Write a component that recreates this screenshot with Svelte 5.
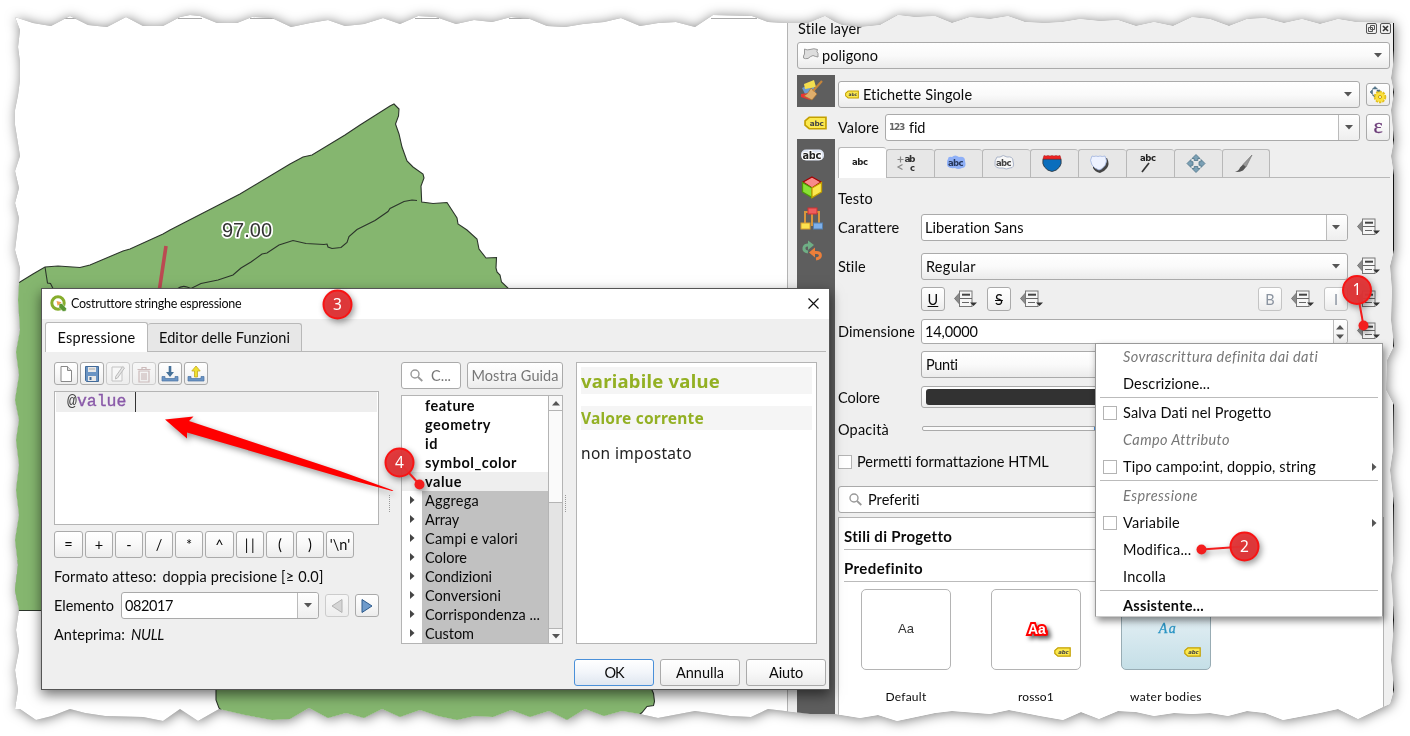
<script>
  // Sets letter spacing so that a label takes exactly the given width.
  function fit(node, width) {
    if (!width) return;
    const natural = node.getBoundingClientRect().width;
    node.style.letterSpacing = (width - natural) / node.textContent.length + 'px';
  }

  const edge = [
    '15,17 33,23 51,26 70,16 88,25 107,27 126,17 143,26 163,26 180,17 190,15 200,16 217,23 237,23 252,17 272,18 291,27 310,23 328,20 345,26 364,24 383,18 400,24 418,16 436,17 456,24 474,20 492,22 511,17 530,19 547,26 565,27 583,24 604,22 621,18 640,26 658,23 676,22 695,27 713,15 752,16 768,22 785,23',
    '808,23 825,16 835,22 842,25 860,27 880,25 898,15 915,17 935,16 952,23 970,17 990,19 1008,16 1025,22 1045,23 1062,22 1080,19 1100,21 1118,20 1136,26 1154,22 1173,26 1192,17 1210,19 1229,26 1247,19 1265,18 1284,23 1302,19 1320,24 1338,19 1356,22 1394,23',
    '1394,50 1393,64 1391,78 1394,92 1391,110 1394,140 1391,156 1394,175 1394,250 1390,266 1392,290 1391,320 1394,346 1387,360 1386,390 1394,405 1393,450 1390,470 1394,505 1393,560 1391,575 1394,620 1391,660 1394,690 1390,704',
    '1383,707 1358,719 1338,709 1320,713 1283,720 1265,713 1247,711 1228,716 1210,713 1192,714 1174,713 1154,716 1136,712 1118,711 1099,719 1081,712 1063,720 1040,716 1009,710 990,714 952,711 935,713 897,721 878,715 860,718 835,714 810,714 768,709 751,717 730,716 695,711 658,718 640,714 622,711 604,716 585,709 567,720 549,711 530,717 511,710 493,717 475,716 457,720 438,716 420,710 400,717 382,709 364,718 346,713 328,718 309,708 290,719 272,720 245,715 219,709 198,721 180,709 163,721 143,717 105,716 85,713 70,709 52,716 36,720 20,709 15,709',
    '18,690 15,670 19,650 16,630 19,610 15,590 18,565 15,540 19,515 16,490 19,465 16,440 19,420 15,400 19,375 16,352 20,330 18,300 20,268 15,250 19,218 15,203 19,188 15,171 20,156 15,125 15,110 18,95 20,80 20,62 18,47 20,30'
  ].join(' ');
  const clip = 'polygon(' + edge.split(' ').map((p) => p.replace(',', 'px ') + 'px').join(',') + ')';

  const ops = [['=', 29], ['+', 28], ['-', 28], ['/', 28], ['*', 28], ['^', 29], ['||', 28], ['(', 28], [')', 28], ["'\\n'", 28]];
  const fields = [['feature', 50], ['geometry', 66], ['id', 13], ['symbol_color', 92], ['value', 37]];
  const groups = [['Aggrega', 54], ['Array', 34], ['Campi e valori', 93], ['Colore', 42], ['Condizioni', 67], ['Conversioni', 76], ['Corrispondenza ...', 115], ['Custom', 49]];
  const files = ['new', 'save', 'edit', 'trash', 'import', 'export'];
  const tabs = ['text', 'format', 'buffer', 'mask', 'shield', 'shadow', 'callout', 'place', 'brush'];
  const menu = [
    { s: 'Sovrascrittura definita dai dati', w: 194, head: true },
    { s: 'Descrizione...', w: 87 },
    { line: true },
    { s: 'Salva Dati nel Progetto', w: 148, check: true },
    { s: 'Campo Attributo', w: 106, head: true },
    { s: 'Tipo campo:int, doppio, string', w: 193, check: true, sub: true },
    { line: true },
    { s: 'Espressione', w: 75, head: true },
    { s: 'Variabile', w: 57, check: true, sub: true },
    { s: 'Modifica...', w: 68 },
    { s: 'Incolla', w: 43 },
    { line: true },
    { s: 'Assistente...', w: 81, bold: true }
  ];
  const pins = [
    { n: 1, x: 1357, y: 290, dx: 1363.5, dy: 325.5 },
    { n: 2, x: 1244.5, y: 546.5, dx: 1201.5, dy: 549.5 },
    { n: 3, x: 337.5, y: 304.5 },
    { n: 4, x: 399.5, y: 462.5, dx: 419.5, dy: 484.5 }
  ];
</script>

{#snippet t(s, w)}<span class="t" use:fit={w}>{s}</span>{/snippet}

{#snippet down()}<svg class="down" width="8" height="5"><path d="M0 0h8L4 4.5z" fill="#555" /></svg>{/snippet}

{#snippet override()}
  <svg width="23" height="18" viewBox="0 0 23 18" class="ovr">
    <path d="M5.5 3v11L.5 8.5z" fill="#8a8a8a" stroke="#777" />
    <rect x="5.5" y="1" width="12.5" height="15.5" fill="#f6f6f6" stroke="#777" />
    <path d="M8 4.7h8" stroke="#444" stroke-width="2" />
    <path d="M6 8.5h12M8 12.5h7" stroke="#666" />
    <path d="M16 12.5h7l-3.500 3.500z" fill="#333" />
  </svg>
{/snippet}

{#snippet tag(w, h)}
  <svg width={w} height={h} viewBox="0 0 22 13">
    <path d="M5 1h16v11H5L1 8.5v-4z" fill="#fce94f" stroke="#c4a000" stroke-width="1.6" />
    <text x="5.500" y="9.300" textLength="13.500" class="abc" font-size="7" fill="#444">abc</text>
  </svg>
{/snippet}

{#snippet glass()}
  <svg width="13" height="13"><circle cx="5" cy="5" r="4" fill="none" stroke="#999" stroke-width="1.4" /><path d="M8 8l4.3 4" stroke="#999" stroke-width="1.8" /></svg>
{/snippet}

<div class="page">
  <div class="torn">
    <div class="paper" style:clip-path={clip}>
      <svg class="map" width="787" height="736">
        <path d="M52 18.5h26M178 18.5h24M250 18.5h24M415 18.5h24M509 18.5h20M711 18.5h46" stroke="#aaa" />
        <g fill="#85b66f" stroke="#2c352b" stroke-width="1.1">
          <path d="M-2 294L20 282 33 274 45 267 58 266 80 267.500 90 265 123 251 130 249 163 234 170 230 240 194 290 164 303 157 312 155 345 135 360 125 390 106 394 104 399 109 398.500 116 395.500 124 399 134 402 147 407 161 413 167 423 174 424 178 421 186 421.700 202 433 203.500 447 202.500 457 218 458 224 467 230 477 239 479 249 486 258 496.500 257.500 496 268 497 272 500 275 501.500 282 508 288 560 400V600H-2z" />
          <path d="M-2 560H42V610.500H-2z" stroke="none" /><path d="M14 610.500H42" />
          <path d="M216 680V700l3 8 30 30H610l32-25.500 5-6 6.500-1 1-4-1-8-4-9V680z" />
          <path fill="none" d="M45 267l2.500 16 3 .5 2.500 5M177 289q5-4 10-2l4 1.500 10-5 17-3.500 15-5 8-7 10-6 11-8 5-1 12-8 14-4.500 13 3 18 1 3-.500 1 3 4 1.500 9-1 6-5 2-6 8-7 18-9 13-9 2-3 14-7 8-1.500 5 .5" />
        </g>
        <path d="M166 246L159.500 289" stroke="#bb4a52" stroke-width="3.600" />
        <text x="222" y="236.500" class="maplabel">97.00</text>
      </svg>

      <section class="dock">
        <header class="dockhead">
          {@render t('Stile layer', 64)}
          <svg width="26" height="11" fill="none" stroke="#555"><rect x=".5" y=".5" width="10" height="10" rx="1.500" /><path d="M4.500 2.500h4v4h-4zM2.500 4.500h4v4h-4z" fill="#eee" /><rect x="14.500" y=".5" width="10" height="10" rx="1.500" /><path d="M17 3l5 5M22 3l-5 5" stroke="#333" stroke-width="1.600" /></svg>
        </header>
        <div class="combo layer">
          <svg width="17" height="12"><path d="M2.500 1Q5 2.500 8 1.500 12 0 15.500 1.500q-1.500 2 .5 4v3.500q-3-.5-5-1.500-3 1-5 3-3 .5-4.500-.5-.5-2 1-4z" fill="#ddd" stroke="#999" /></svg>
          {@render t('poligono', 56)}{@render down()}
        </div>
        <div class="body">
          <nav class="rail">
            <div><svg width="24" height="24" viewBox="0 0 24 24"><path d="M2 9l11-5 3 11-9 4z" fill="#6c9bd0" /><path d="M4 5l10-4 2 7-11 2z" fill="#f4de4e" /><path d="M1 15l8-1 1 7-9-3z" fill="#e33" /><path d="M11 9l6 6-5 6-8-4q5-3 7-8z" fill="#dfae6c" stroke="#a8702c" stroke-width=".7" /><path d="M13 12L22 2" stroke="#c6853a" stroke-width="2.200" /></svg></div>
            <div class="sel">{@render tag(23, 14)}</div>
            <div><svg width="26" height="16"><rect x="1" y="2.500" width="23" height="11" rx="5" fill="#dfe6f3" /><text x="2.500" y="11.500" textLength="19" class="abc" font-size="10" fill="#222" stroke="#fff" stroke-width="2" paint-order="stroke">abc</text></svg></div>
            <div><svg width="24" height="24" viewBox="0 0 24 24" stroke-width="1.300"><path d="M12 2l9 5-9 6-9-6z" fill="#f88b8b" stroke="#a40000" /><path d="M2.500 7.500L12 13v9.500L2.500 17z" fill="#8ae234" stroke="#4e9a06" /><path d="M21.500 7.500L12 13v9.500l9.500-5.500z" fill="#fce94f" stroke="#c4a000" /></svg></div>
            <div><svg width="24" height="24" viewBox="0 0 24 24"><path d="M5 17V5h14v12M12 5v14" stroke="#d8963c" stroke-width="2" fill="none" /><rect x="8" y="1" width="9" height="6" fill="#ef5d5d" stroke="#c33" /><rect x="1" y="16" width="9" height="6" fill="#fce24f" stroke="#d8a030" /><rect x="13.500" y="16" width="9" height="6" fill="#7eb0ea" stroke="#5580b0" /></svg></div>
            <div><svg width="24" height="24" viewBox="0 0 24 24" fill="none" stroke-width="3"><path d="M8 13C2 12 3 5 9 6" stroke="#6fae85" /><path d="M8 1.500l6 4.500-6 5z" fill="#6fae85" /><path d="M16 20c6-1 6-7-1-6.500" stroke="#ec7f3a" /><path d="M15 8.500v10l-6-5z" fill="#ec7f3a" /></svg></div>
          </nav>
          <div class="main">
            <div class="row r1">
              <div class="combo grow">{@render tag(14, 9)}{@render t('Etichette Singole', 109)}{@render down()}</div>
              <div class="btn" style:height="23px"><svg width="18" height="18"><g fill="#54788f" stroke="#3d5d72" stroke-width=".5"><path d="M6 .5l2.500 2.500h-5zM1 6l2.500-2.500v5zM6 11.500L3.500 9h5zM8 4h3v3H8z" /></g><circle cx="11" cy="11" r="5" fill="#fce13c" stroke="#e3c01f" stroke-width="2.500" stroke-dasharray="2.200 1" /><circle cx="11" cy="11" r="4.500" fill="#fce13c" /><circle cx="11" cy="11" r="1.500" fill="#fff" stroke="#c4a000" /></svg></div>
            </div>
            <div class="row r2">
              {@render t('Valore', 41)}
              <div class="combo edit grow"><b class="num">{@render t('123', 15)}</b>{@render t('fid', 16)}<i class="arrow">{@render down()}</i></div>
              <div class="btn eps" style:height="27px">ε</div>
            </div>
            <div class="tabs">
              {#each tabs as tab, i}
                <div class="tab" class:active={i === 0}>
                  <svg width="24" height="22" viewBox="0 0 24 22">
                    {#if tab === 'text'}<text x="4" y="13" textLength="16" class="abc" font-size="8.500" fill="#222">abc</text>
                    {:else if tab === 'format'}<path d="M1.500 6.500h6M4.500 3.500v6M6.500 11.500l-4.500 2.500 4.500 2.500" fill="none" stroke="#888" stroke-width="1.200" /><text x="8.500" y="9" textLength="11" class="abc" font-size="9" fill="#333">ab</text><text x="14" y="18" class="abc" font-size="8.500" fill="#333">c</text>
                    {:else if tab === 'buffer'}<path d="M4 6q0-3 4-2 3-3 7 0 6-1 6 4 2 7-3 7-4 2-7 0-9 1-8-5 0-3 1-4z" fill="#8fb0f7" /><text x="4" y="13" textLength="15.500" class="abc" font-size="8.500" fill="#27385c">abc</text>
                    {:else if tab === 'mask'}<path d="M4 6q0-3 4-2 3-3 7 0 6-1 6 4 2 7-3 7-4 2-7 0-9 1-8-5 0-3 1-4z" fill="#f7f7f7" stroke="#aab4c8" /><text x="4" y="13" textLength="15.500" class="abc" font-size="8.500" fill="#444">abc</text>
                    {:else if tab === 'shield'}<path d="M3 6q-1 5 1.500 8 3 4 7.500 4.500 4.500-.5 7.500-4.500 2.500-3 1.500-8z" fill="#0a6ebd" stroke="#333" stroke-width=".8" /><path d="M3 6l1-3.500q2 1 4 0 2 1 4 0 2 1 4 0 2 1 4 0l1 3.500z" fill="#e22" stroke="#a22" stroke-width=".6" />
                    {:else if tab === 'shadow'}<path d="M5 5q2 1 4 0 3 1 5 0 2 1 5 0 3 6 0 10-3 4-7 5-5-1-7-5z" fill="#444" /><path d="M4 3q2 1 4 0 2 1 4 0 2 1 5 0 3 5 0 9.500-3 4-6 4.500-4-1-7-5Q1 7 4 3z" fill="#edf2ff" stroke="#9fb4e0" stroke-width=".8" />
                    {:else if tab === 'callout'}<text x="4" y="8" textLength="16" class="abc" font-size="8.500" fill="#222">abc</text><path d="M13 10L6 19" stroke="#333" stroke-width="1.700" />
                    {:else if tab === 'place'}<g fill="#7ba0b5" stroke="#4e7488" stroke-width=".8"><path d="M12 1.500l4 4h-2.200v2h-3.600v-2H8z" /><path d="M12 19.500l4-4h-2.200v-2h-3.600v2H8z" /><path d="M3 10.500l4-4v2.200h2v3.600h-2V14.500z" /><path d="M21 10.500l-4-4v2.200h-2v3.600h2V14.500z" /></g>
                    {:else}<path d="M20 2l-9 9.500 3 2.500z" fill="#999" stroke="#777" stroke-width=".7" /><path d="M11 11.500l3 2.500-3 3.500q-4 2-8 1.500 4-1.500 5-4.500z" fill="#555" />{/if}
                  </svg>
                </div>
              {/each}
            </div>
            <div class="row testo">{@render t('Testo', 35)}</div>
            <div class="row r3"><div class="lab">{@render t('Carattere', 61)}</div><div class="combo edit w427">{@render t('Liberation Sans', 99)}<i class="arrow">{@render down()}</i></div>{@render override()}</div>
            <div class="row r4"><div class="lab">{@render t('Stile', 28)}</div><div class="combo w427">{@render t('Regular', 50)}{@render down()}</div>{@render override()}</div>
            <div class="row r5">
              <div class="btn sq"><u>U</u></div>{@render override()}
              <div class="btn sq"><s>S</s></div>{@render override()}
              <div class="btn sq off right">B</div>{@render override()}
              <div class="btn sq off">I</div>{@render override()}
            </div>
            <div class="row r6"><div class="lab">{@render t('Dimensione', 77)}</div><div class="combo edit w427">{@render t('14,0000', 53)}<i class="arrow spin"><svg width="8" height="14"><path d="M0 4.500h8L4 0zM0 9.500h8L4 14z" fill="#555" /></svg></i></div>{@render override()}</div>
            <div class="row r7"><div class="combo w427">{@render t('Punti', 32)}</div></div>
            <div class="row r8"><div class="lab">{@render t('Colore', 42)}</div><div class="combo w427 color"><div class="swatch"></div></div></div>
            <div class="row r9"><div class="lab">{@render t('Opacità', 51)}</div><div class="slider"><i></i></div></div>
            <div class="row r10"><i class="check"></i>{@render t('Permetti formattazione HTML', 191)}</div>
            <div class="combo edit fav">{@render glass()}{@render t('Preferiti', 52)}</div>
            <div class="gallery">
              <h3>{@render t('Stili di Progetto', 108)}</h3>
              <h3>{@render t('Predefinito', 79)}</h3>
              <div class="thumbs">
                <figure><div class="thumb"><span class="aa">Aa</span></div><figcaption>{@render t('Default', 41)}</figcaption></figure>
                <figure><div class="thumb"><span class="aa red">Aa</span><i class="mini">{@render tag(17, 10)}</i></div><figcaption>{@render t('rosso1', 36)}</figcaption></figure>
                <figure><div class="thumb water"><span class="aa ital">Aa</span><i class="mini">{@render tag(17, 10)}</i></div><figcaption>{@render t('water bodies', 72)}</figcaption></figure>
              </div>
            </div>
          </div>
        </div>
      </section>

      <section class="dialog">
        <header class="title">
          <svg width="17" height="17" viewBox="0 0 17 17"><circle cx="8" cy="8" r="6.200" fill="none" stroke="#86ad2c" stroke-width="3" /><path d="M9 8.500h3l4.500 5-.5 2.500-3 .5-4-4z" fill="#589632" stroke="#fff" stroke-width=".5" /><path d="M6.500 6l5 1.200-3.800 3.800z" fill="#f0a050" /></svg>
          {@render t('Costruttore stringhe espressione', 170)}
          <svg class="close" width="11" height="11"><path d="M.5 .5l10 10M10.500 .5l-10 10" stroke="#111" stroke-width="1.200" /></svg>
        </header>
        <div class="dtabs"><div class="dtab on">{@render t('Espressione', 78)}</div><div class="dtab">{@render t('Editor delle Funzioni', 131)}</div></div>
        <div class="cols">
          <div class="left">
            <div class="tools">
              {#each files as f}
                <div class="btn" class:dim={f === 'edit' || f === 'trash'}>
                  <svg width="18" height="18" viewBox="0 0 18 18">
                    {#if f === 'new'}<path d="M4 1.500h6.500l4 4v11H4z" fill="#fff" stroke="#888" /><path d="M10.500 1.500v4h4" fill="#ddd" stroke="#888" />
                    {:else if f === 'save'}<path d="M2.500 1.500h13v15h-12l-1-1z" fill="#6a94c4" stroke="#426a98" /><path d="M5 2h8v5H5z" fill="#e8e8e8" /><path d="M6 4h6" stroke="#aaa" /><path d="M5 11h8v5H5z" fill="#e8e8e8" /><path d="M6.500 12h2v3h-2z" fill="#426a98" />
                    {:else if f === 'edit'}<path d="M3 2h10v14H3z" fill="#fff" stroke="#999" /><path d="M15.500 3l-7 10-2 1 .2-2.500 7-10z" fill="#ddd" stroke="#888" />
                    {:else if f === 'trash'}<path d="M4 6h10v11H4zM7 8v7M9 8v7M11 8v7M2.500 4.500h13M7 4V2.500h4V4" fill="none" stroke="#a88" stroke-width="1.200" />
                    {:else if f === 'import'}<path d="M1 11.500h3v2h10v-2h3v4.500H1z" fill="#6a94c4" stroke="#4a74a4" stroke-width=".7" /><path d="M7.700 1h2.600v6h2.700l-4 5-4-5h2.700z" fill="#467199" />
                    {:else}<path d="M1 11.500h3v2h10v-2h3v4.500H1z" fill="#6a94c4" stroke="#4a74a4" stroke-width=".7" /><path d="M7.500 12h3V6h2.700L9 1 4.800 6h2.700z" fill="#f0e030" stroke="#c4a820" stroke-width=".8" />{/if}
                  </svg>
                </div>
              {/each}
            </div>
            <div class="editor"><div class="line"><span>@</span>value<i></i></div></div>
            <div class="ops">{#each ops as [o, w]}<div class="btn" class:wide={o === '||'} style:width="{w}px">{o}</div>{/each}</div>
            <div class="row fmt">{@render t('Formato atteso:', 102)}{@render t('doppia precisione [≥ 0.0]', 161)}</div>
            <div class="row elem">{@render t('Elemento', 60)}<div class="combo edit">{@render t('082017', 48)}<i class="arrow">{@render down()}</i></div>
              <div class="btn dim"><svg width="12" height="14"><path d="M11 .5v13L1 7z" fill="#bbb" stroke="#777" /></svg></div>
              <div class="btn"><svg width="12" height="14"><path d="M1 .5v13L11 7z" fill="#6f9bcb" stroke="#2c5a8c" /></svg></div></div>
            <div class="row ante">{@render t('Anteprima:', 71)}<em>{@render t('NULL', 33)}</em></div>
          </div>
          <i class="split"></i>
          <div class="mid">
            <div class="row find"><div class="combo edit">{@render glass()}{@render t('C...', 20)}</div><div class="btn guide">{@render t('Mostra Guida', 87)}</div></div>
            <div class="tree">
              <div class="list">
                {#each fields as [n, w]}<div class="item field" class:cur={n === 'value'}>{@render t(n, w)}</div>{/each}
                {#each groups as [n, w]}<div class="item group"><svg width="5" height="8"><path d="M0 0v8l4.500-4z" fill="#444" /></svg><div>{@render t(n, w)}</div></div>{/each}
              </div>
              <div class="scroll"><div class="sb"><svg width="8" height="5"><path d="M0 4.500h8L4 0z" fill="#555" /></svg></div><div class="knob"></div><div class="track"></div><div class="sb">{@render down()}</div></div>
            </div>
          </div>
          <i class="split second"></i>
          <div class="help">
            <h1>{@render t('variabile value', 139)}</h1>
            <h2>{@render t('Valore corrente', 123)}</h2>
            <p>{@render t('non impostato', 111)}</p>
          </div>
        </div>
        <footer><div class="btn ok">{@render t('OK', 19)}</div><div class="btn">{@render t('Annulla', 48)}</div><div class="btn">{@render t('Aiuto', 34)}</div></footer>
      </section>

      <section class="menu">
        {#each menu as m}
          {#if m.line}<hr />
          {:else}
            <div class="mi" class:head={m.head} class:bold={m.bold}>
              <div class="ck">{#if m.check}<i class="check"></i>{/if}</div>
              {@render t(m.s, m.w)}
              {#if m.sub}<svg class="sub" width="5" height="8"><path d="M0 0v8l4.500-4z" fill="#555" /></svg>{/if}
            </div>
          {/if}
        {/each}
      </section>
    </div>
  </div>

  <svg class="notes" width="1410" height="736">
    <path d="M165 419.500L193.500 416.500 189 421 340 471 393.500 490.500 392 491 340 477 187 432.500 187 438.500z" fill="#f00" />
    {#each pins as p}
      {#if p.dx}<path d="M{p.x} {p.y}L{p.dx} {p.dy}" stroke="#f31d1d" stroke-width="2" /><circle cx={p.dx} cy={p.dy} r="5" fill="#f31d1d" />{/if}
      <circle cx={p.x} cy={p.y} r="14" fill="#e03234" fill-opacity=".95" stroke="#f81414" stroke-width="2" />
      <text x={p.x} y={p.y + 5} text-anchor="middle">{p.n}</text>
    {/each}
  </svg>
</div>

<style>
  :global(body) { margin: 0; background: #fff; overflow: hidden; }
  .page { position: relative; width: 1410px; height: 736px; overflow: hidden; background: #fff; font: 14.5px/19px Lato, "Noto Sans", sans-serif; color: #0a0a0a; }
  .page :global(svg) { display: block; flex: none; }
  .page div, .page header, .page i { box-sizing: border-box; }
  .torn { filter: drop-shadow(0 0 .6px #888) drop-shadow(1px 1px 6px rgba(0, 0, 0, .5)); }
  .paper { position: relative; display: flex; width: 1410px; height: 736px; background: #fff; }
  .t { display: inline-block; white-space: nowrap; flex: none; }
  .abc { font-family: "DejaVu Sans", sans-serif; font-weight: 700; }
  .maplabel { font: 20px "Liberation Sans", sans-serif; fill: #333; stroke: #fff; stroke-width: 3.5px; stroke-linejoin: round; paint-order: stroke; }

  .dock { width: 623px; box-sizing: border-box; border-left: 1px solid #b4b4b4; background: linear-gradient(90deg, #efefef 605px, #111 605px); padding: 19px 20px 0 9px; }
  .dockhead { display: flex; align-items: center; justify-content: space-between; width: 595px; height: 19px; padding: 0 0 0 1px; }
  .combo { display: flex; align-items: center; height: 27px; border: 1px solid #aaa; border-radius: 3px; background: linear-gradient(#fff, #fafafa 50%, #ebebeb); padding-left: 4px; }
  .combo > :global(.down) { margin: 0 7px 0 auto; }
  .combo.edit { background: #fff; padding-left: 3px; }
  .arrow { display: flex; align-items: center; justify-content: center; width: 21px; height: 100%; margin-left: auto; padding-right: 1px; border-left: 1px solid #bbb; background: linear-gradient(#fff, #eee); border-radius: 0 3px 3px 0; }
  .arrow.spin { width: 14px; }
  .layer { width: 593px; margin-top: 4px; gap: 3px; }
  .layer > svg:first-child { margin-top: -4px; }
  .body { display: flex; margin-top: 6px; height: 661px; }
  .rail { width: 38px; background: #5e5e5e; }
  .rail div { height: 32px; display: flex; align-items: center; padding: 0 0 0 3px; }
  .rail .sel { background: #efefef; padding: 0 0 0 7px; }
  .main { width: 553px; margin-left: 3px; padding-top: 6px; display: flex; flex-direction: column; }
  .row { display: flex; align-items: center; flex: none; }
  .grow { flex: 1; }
  .r1, .r2 { height: 27px; }
  .r1 .combo { gap: 4px; padding-left: 6px; }
  .r1 .btn, .r2 .btn { width: 24px; margin-left: 6px; }
  .r2 { margin-top: 6px; }
  .r2 .combo { margin-left: 6px; }
  .num { font: 700 9px/19px "DejaVu Sans", sans-serif; color: #666; margin-right: 5px; }
  .btn { display: flex; align-items: center; justify-content: center; flex: none; border: 1px solid #aaa; border-radius: 3px; background: linear-gradient(#fff, #f8f8f8 50%, #ececec); }
  .eps { font: 22px/20px "Liberation Serif", serif; color: #6a3a77; padding-bottom: 3px; -webkit-text-stroke: .3px #6a3a77; }
  .tabs { display: flex; align-items: flex-end; height: 31px; margin-top: 6px; border-bottom: 1px solid #b8b8b8; flex: none; width: 552px; }
  .tab { width: 48px; height: 28px; border: 1px solid #b8b8b8; border-width: 1px 0 0 1px; border-radius: 3px 3px 0 0; background: #e7e7e7; display: flex; justify-content: center; align-items: center; padding-right: 4px; }
  .tab:last-child { border-right-width: 1px; }
  .tab.active { width: 48px; height: 31px; background: #fff; margin-bottom: -1px; }
  .testo { margin-top: 10px; height: 20px; }
  .lab { width: 83px; flex: none; }
  .w427 { width: 427px; flex: none; }
  .row > .combo + :global(.ovr) { margin-left: 9px; margin-top: -2px; }
  .r3 { margin-top: 6px; height: 27px; }
  .r4 { margin-top: 12px; height: 27px; }
  .r5 { margin-top: 7px; height: 24px; padding-left: 83px; }
  .sq { width: 24px; height: 24px; }
  .r5 > :global(.ovr) { margin: 0 10px 0 9px; }
  .r5 .right { margin-left: 205px; }
  .r5 > :global(.ovr:last-child) { margin-right: 0; }
  .off { color: #8a93a0; border-color: #c4c4c4; }
  .r6 { margin-top: 8px; height: 25px; }
  .r6 .combo { height: 25px; }
  .r7 { margin-top: 7px; height: 27px; padding-left: 83px; }
  .r8 { margin-top: 8px; height: 22px; }
  .color { height: 22px; padding: 2px 4px; }
  .swatch { height: 16px; width: 100%; border-radius: 3px; background: #323232; }
  .r9 { margin-top: 12px; height: 19px; }
  .slider { width: 180px; height: 5px; margin-left: 1px; border: 1px solid #aaa; border-radius: 2px; background: #fafafa; margin-top: -2px; }
  .slider i { display: block; margin-left: 171px; width: 8px; height: 3px; background: #4a90d9; }
  .r10 { margin-top: 13px; height: 19px; gap: 5px; }
  .check { display: block; width: 14px; height: 14px; border: 1px solid #b4b4b4; background: #fff; flex: none; }
  .main > .fav { margin-top: 15px; padding-left: 10px; gap: 6px; width: 545px; flex: none; }
  .gallery { width: 546px; height: 220px; margin-top: 4px; border: 1px solid #b4b4b4; background: #fff; padding: 0 5px; flex: none; }
  h3 { margin: 0; height: 27px; padding-top: 4px; border-bottom: 1px solid #bbb; font: 700 15px/28px Lato, sans-serif; }
  .thumbs { display: flex; gap: 40px; padding: 7px 0 0 17px; }
  figure { margin: 0; width: 90px; text-align: center; }
  .thumb { height: 81px; border: 1px solid #b4b4b4; border-radius: 5px; display: flex; align-items: center; justify-content: center; position: relative; }
  .water { background: linear-gradient(#f0f6fa, #c5dfe7); border-color: #98acb4; }
  .aa { font: 13px/16px "Liberation Sans", sans-serif; color: #333; margin-top: -2px; }
  .red { color: #fff; font-weight: 700; font-size: 14px; margin-left: 2px; -webkit-text-stroke: 4px red; paint-order: stroke; filter: drop-shadow(3px 3px 2px rgba(0, 0, 0, .6)); }
  .ital { font-family: "Liberation Serif", serif; font-style: italic; font-size: 14px; margin-left: 4px; color: #2b95c4; letter-spacing: 1.5px; -webkit-text-stroke: .3px #2b95c4; }
  .mini { position: absolute; right: 9px; bottom: 12px; }
  figcaption { font-size: 12px; margin-top: 17px; }

  .dialog { position: absolute; left: 41px; top: 288px; width: 789px; height: 402px; box-sizing: border-box; border: 1px solid #555; background: #efefef; box-shadow: 0 5px 12px rgba(0, 0, 0, .55); }
  .title { display: flex; align-items: center; height: 30px; background: #fff; padding: 0 10px 2px 8px; gap: 4px; font-size: 12.5px; }
  .close { margin-left: auto; }
  .dtabs { display: flex; align-items: flex-end; height: 33px; margin: 0 3px; border-bottom: 1px solid #b8b8b8; }
  .dtab { width: 154px; height: 28px; border: 1px solid #b8b8b8; border-width: 1px 1px 0 0; border-radius: 3px 3px 0 0; background: #e7e7e7; display: flex; align-items: center; justify-content: center; }
  .dtab.on { width: 103px; height: 30px; background: #fff; border-left-width: 1px; margin-bottom: -1px; }
  .cols { display: flex; padding: 10px 0 0 12px; }
  .left { width: 325px; }
  .tools { display: flex; gap: 2px; }
  .tools .btn { width: 24px; height: 23px; }
  .dim { opacity: .5; }
  .editor { height: 134px; margin-top: 6px; border: 1px solid #b4b4b4; background: #fff; padding: 0 1px; }
  .line { display: flex; height: 20px; background: #eee; padding-left: 11px; font: 16.5px/20px "Liberation Mono", monospace; color: #8959a8; -webkit-text-stroke: .35px #8959a8; }
  .line span { color: #444; -webkit-text-stroke: 0; }
  .line i { width: 1px; background: #333; margin-left: 9px; }
  .ops { display: flex; gap: 2px; margin-top: 6px; }
  .ops .btn { height: 27px; }
  .ops .wide { letter-spacing: 2.5px; padding-left: 2px; }
  .fmt { margin-top: 8px; height: 20px; gap: 6px; }
  .elem { margin-top: 6px; height: 27px; }
  .elem .combo { width: 198px; margin-left: 7px; }
  .elem .btn { width: 24px; height: 23px; margin-left: 6px; }
  .ante { margin-top: 5px; height: 20px; gap: 6px; }
  .split { width: 2px; height: 17px; margin: 133px 10px 0; border-left: 1px dotted #999; flex: none; }
  .split.second { margin-left: 2px; margin-right: 9px; }
  .cols .mid { width: 162px; }
  .find { gap: 6px; color: #777; }
  .find .combo { width: 60px; padding-left: 8px; gap: 8px; }
  .guide { width: 96px; height: 27px; }
  .tree { display: flex; height: 249px; margin-top: 6px; border: 1px solid #b4b4b4; background: #fff; }
  .list { width: 146px; }
  .item { height: 19px; display: flex; align-items: center; }
  .field { padding-left: 23px; font-weight: 700; }
  .cur { background: #eee; }
  .group svg { margin: -2px 7px 0 8px; }
  .group div { flex: 1; height: 19px; background: #c1c1c1; padding-left: 3px; }
  .scroll { width: 14px; border-left: 1px solid #b4b4b4; display: flex; flex-direction: column; }
  .sb { height: 14px; display: flex; align-items: center; justify-content: center; background: #f8f8f8; }
  .knob { height: 93px; border: 1px solid #b4b4b4; border-width: 1px 0; background: #fafafa; }
  .track { flex: 1; background: #e4e4e4; border-bottom: 1px solid #b4b4b4; }
  .help { width: 241px; height: 282px; border: 1px solid #b4b4b4; background: #fff; padding: 4px 4px 0; color: #93b023; font-family: "Noto Sans", sans-serif; }
  h1 { margin: 0; font-size: 18.500px; line-height: 28px; height: 27px; background: #f5f5f5; }
  h2 { margin: 12px 0 0; font-size: 15.500px; line-height: 25px; height: 24px; background: #f5f5f5; }
  p { margin: 13px 0 0; font-size: 15.500px; line-height: 20px; color: #222; }
  footer { display: flex; justify-content: flex-end; gap: 6px; padding: 15px 3px 0 0; }
  footer .btn { width: 80px; height: 27px; }
  .ok { border-color: #4a90d9; background: linear-gradient(#fff, #f2f5fa 50%, #dfe6f0); }

  .menu { position: absolute; left: 1095px; top: 343px; width: 288px; height: 274px; box-sizing: border-box; border: 1px solid #999; border-bottom-color: #ccc; background: #fff; box-shadow: 2px 4px 7px rgba(0, 0, 0, .45); overflow: hidden; }
  .mi { display: flex; align-items: center; height: 27px; padding: 0 5px 2px 7px; }
  .ck { width: 20px; }
  .head { font-style: italic; color: #777; }
  .bold { font-weight: 700; }
  .sub { margin-left: auto; }
  hr { height: 1px; margin: -1px 4px 2px; border: 0; background: #bbb; }
  .notes { position: absolute; inset: 0; filter: drop-shadow(2px 3px 3px rgba(0, 0, 0, .4)); }
  .notes text { font: 15.5px "Noto Sans", sans-serif; fill: #fff; }
</style>
